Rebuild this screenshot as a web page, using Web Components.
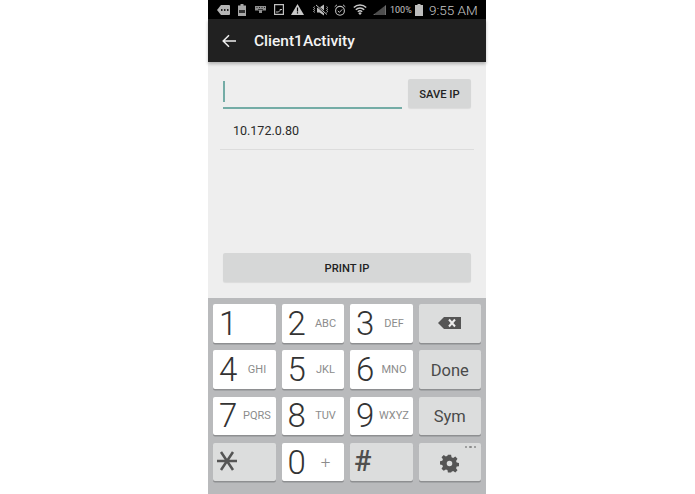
<!DOCTYPE html>
<html>
<head>
<meta charset="utf-8">
<title>Client1Activity</title>
<style>
  html, body { margin: 0; padding: 0; background: #fff; }
  body { display: grid; grid-template-columns: 208px 278px 1fr; height: 494px; overflow: hidden; font-family: Roboto, "Liberation Sans", sans-serif; }
  phone-screen { grid-column: 2; }
</style>
</head>
<body>
<phone-screen>
  <status-bar></status-bar>
  <app-bar title="Client1Activity"></app-bar>
  <ip-form></ip-form>
  <num-keyboard></num-keyboard>
</phone-screen>

<script>
class PhoneScreen extends HTMLElement {
  constructor() {
    super();
    this.attachShadow({ mode: 'open' }).innerHTML = `
      <style>
        :host { display: flex; flex-direction: column; height: 494px; background: #eee; }
      </style>
      <slot></slot>
    `;
  }
}

class StatusBar extends HTMLElement {
  constructor() {
    super();
    this.attachShadow({ mode: 'open' }).innerHTML = `
      <style>
        :host { display: flex; align-items: center; height: 19px; background: #000; color: #bdbdbd; flex: none; }
        svg { display: block; flex: none; }
        .pct { font-size: 9px; margin-left: 4px; width: 21px; color: #c4c4c4; }
        .time { font-size: 13.500px; font-weight: 300; margin-left: 6px; color: #c8c8c8; white-space: nowrap; }
      </style>
      <svg style="margin-left:9px" width="13" height="10" viewBox="0 0 13 10"><path fill="#b5b5b5" d="M4 0h8a1 1 0 0 1 1 1v8a1 1 0 0 1-1 1H4L0 5z"/><path fill="#222" d="M4 4h1.500v2H4zM7 4h1.500v2H7zM10 4h1.500v2H10z"/></svg>
      <svg style="margin-left:8px" width="8" height="12" viewBox="0 0 8 12"><path fill="#a8a8a8" d="M2.500 0h3v1.500H8V12H0V1.500h2.500z"/><path fill="#333" d="M1 6h6v3H1z"/></svg>
      <svg style="margin-left:9px" width="11" height="7" viewBox="0 0 11 7"><path fill="#8f8f8f" d="M0 0h11v4.500H7V7H4V4.500H0z"/><path fill="#222" d="M1.500 1h1v1h-1zM4 1h1v1H4zM6.500 1h1v1h-1zM9 1h1v1H9zM3 3h5v.7H3z"/></svg>
      <svg style="margin-left:8px" width="10" height="11" viewBox="0 0 10 11"><path fill="none" stroke="#c0c0c0" stroke-width="1.200" d="M.6.600h8.800v9.800H.6z"/><path fill="none" stroke="#c0c0c0" d="M2 8h2.500l1.500-1.500V5.500h2"/></svg>
      <svg style="margin-left:7px" width="13" height="11" viewBox="0 0 13 11"><path fill="#c8c8c8" d="M6.500 0L13 11H0z"/><path fill="#000" d="M5.900 3.500h1.200v4H5.900zM5.900 8.200h1.200v1.300H5.900z"/></svg>
      <svg style="margin-left:8px" width="18" height="12" viewBox="0 0 18 12" fill="none" stroke="#bdbdbd"><path fill="#bdbdbd" stroke="none" d="M5 3.500h2.500L12 .5v11L7.500 8.500H5z"/><path d="M4 1L15 10.500" stroke="#000" stroke-width="2"/><path d="M4 1L15 10.500" stroke="#d0d0d0" stroke-width=".9"/><path d="M2.800 2.500l-1.300 1 1.300 1-1.300 1 1.300 1-1.300 1 1.300 1M14.500 2.500l1.300 1-1.300 1 1.300 1-1.300 1 1.300 1-1.300 1" stroke-width=".8"/></svg>
      <svg style="margin-left:4px" width="12" height="12" viewBox="0 0 12 12" fill="none" stroke="#bdbdbd"><circle cx="6" cy="6.800" r="4.400" stroke-width="1.100"/><path d="M3.800 6.800l1.600 1.600 2.800-3M.7 2.800L3 .8M11.300 2.800L9 .8" stroke-width="1"/></svg>
      <svg style="margin-left:7px" width="14" height="11" viewBox="0 0 14 11"><path fill="none" stroke="#c8c8c8" stroke-width="1.500" d="M.8 3.500a9 9 0 0 1 12.400 0M2.800 5.700a6 6 0 0 1 8.400 0M4.800 7.800a3.200 3.200 0 0 1 4.400 0"/><path fill="#c8c8c8" d="M7 11L5.300 9.200a2.400 2.400 0 0 1 3.400 0z"/></svg>
      <svg style="margin-left:6px" width="13" height="10" viewBox="0 0 13 10"><path fill="#6e6e6e" d="M13 0v10H0z"/><path stroke="#000" stroke-width=".6" d="M3 10V7M5 10V5M7 10V4M9 10V2.500M11 10V1"/></svg>
      <span class="pct">100%</span>
      <svg style="margin-left:4px" width="8" height="12" viewBox="0 0 8 12"><path fill="#bdbdbd" d="M2.500 0h3v1H8v11H0V1h2.500z"/></svg>
      <span class="time">9:55 AM</span>
    `;
  }
}

class AppBar extends HTMLElement {
  constructor() {
    super();
    this.attachShadow({ mode: 'open' }).innerHTML = `
      <style>
        :host { display: flex; align-items: center; height: 43px; background: #212121; color: #fff; flex: none; padding-left: 14px; box-shadow: 0 2px 3px rgba(0,0,0,.25); z-index: 1; }
        svg { display: block; }
        span { font-size: 15.500px; font-weight: 500; margin-left: 18px; color: #f4f4f4; }
      </style>
      <svg width="14" height="14" viewBox="0 0 14 14" fill="none" stroke="#f0f0f0" stroke-width="1.500"><path d="M14 7H1.500M7 1.200L1.200 7 7 12.800"/></svg>
      <span></span>
    `;
  }

  connectedCallback() {
    this.shadowRoot.querySelector('span').textContent = this.getAttribute('title');
  }
}

class FlatButton extends HTMLElement {
  constructor() {
    super();
    this.attachShadow({ mode: 'open' }).innerHTML = `
      <style>
        :host { display: flex; align-items: center; justify-content: center; box-sizing: border-box; height: 29px; padding-top: 1px; background: #d6d7d7; color: #222; border-radius: 2px; font-size: 11.200px; font-weight: 500; box-shadow: 0 1px 1px rgba(0,0,0,.08); }
      </style>
      <slot></slot>
    `;
  }
}

class IpForm extends HTMLElement {
  constructor() {
    super();
    this.attachShadow({ mode: 'open' }).innerHTML = `
      <style>
        :host { display: flex; flex-direction: column; flex: 1; padding-top: 17px; background: #eee; }
        .top { display: flex; align-items: flex-start; margin: 0 15px; gap: 6px; }
        .field { flex: 1; height: 30px; border-bottom: 2px solid #74aca6; box-sizing: border-box; }
        .caret { display: block; width: 2px; height: 21px; margin-top: 2px; background: #74aca6; }
        .save { width: 63px; flex: none; }
        .item { margin: 9px 12px 0; height: 32px; padding: 4px 0 0 13px; box-sizing: border-box; border-bottom: 1px solid #dcdcdc; font-size: 12.500px; color: #2a2a2a; line-height: 18px; }
        .print { margin: auto 15px 16px; height: 29px; }
      </style>
      <div class="top">
        <div class="field"><i class="caret"></i></div>
        <flat-button class="save">SAVE IP</flat-button>
      </div>
      <div class="item">10.172.0.80</div>
      <flat-button class="print">PRINT IP</flat-button>
    `;
  }
}

class KeyCap extends HTMLElement {
  constructor() {
    super();
    this.attachShadow({ mode: 'open' }).innerHTML = `
      <style>
        :host { display: flex; align-items: center; position: relative; background: #fff; border-radius: 2px; box-shadow: 0 1.500px 0 #8e8f91; color: #333; min-width: 0; }
        :host([fn]) { background: #dcdddd; justify-content: center; color: #4a4a4a; }
        .main { font-size: 33px; font-weight: 300; line-height: 39px; margin-left: 6px; width: 22px; flex: none; }
        .sub { flex: 1; font-size: 11px; color: #8c8c8c; text-align: center; padding-right: 2.500px; white-space: nowrap; }
        :host([sub="+"]) .sub { font-size: 17px; font-weight: 300; }
      </style>
      <span class="main"></span><span class="sub"></span><slot></slot>
    `;
  }

  connectedCallback() {
    const main = this.shadowRoot.querySelector('.main');
    const sub = this.shadowRoot.querySelector('.sub');
    if (this.hasAttribute('num')) {
      main.textContent = this.getAttribute('num');
      sub.textContent = this.getAttribute('sub') || '';
    } else {
      main.remove();
      sub.remove();
    }
  }
}

class NumKeyboard extends HTMLElement {
  constructor() {
    super();
    this.attachShadow({ mode: 'open' }).innerHTML = `
      <style>
        :host { display: grid; grid-template-columns: repeat(4, 1fr); grid-auto-rows: 38.500px; gap: 7.800px 6px; flex: none; height: 196px; box-sizing: border-box; padding: 6px 5px 0; background: #b9babc; }
        .word { font-size: 16.500px; color: #4a4a4a; padding-top: 1px; }
        svg { display: block; }
        .star { justify-content: flex-start; padding-left: 3px; }
        .hash { justify-content: flex-start; padding-left: 4px; font-size: 29px; font-weight: 500; color: #4f4f4f; padding-bottom: 3px; }
        .gear { margin-top: 3px; }
        .dots { position: absolute; right: 5px; top: 3px; display: flex; gap: 2px; }
        .dots i { width: 2.500px; height: 2.500px; background: #8a8a8a; border-radius: 50%; }
      </style>
      <key-cap num="1"></key-cap>
      <key-cap num="2" sub="ABC"></key-cap>
      <key-cap num="3" sub="DEF"></key-cap>
      <key-cap fn><svg width="23" height="12" viewBox="0 0 23 12"><path fill="#555" d="M6 0h17v12H6L0 6z"/><path stroke="#eee" stroke-width="2" d="M11 2.500l6 7M17 2.500l-6 7"/></svg></key-cap>
      <key-cap num="4" sub="GHI"></key-cap>
      <key-cap num="5" sub="JKL"></key-cap>
      <key-cap num="6" sub="MNO"></key-cap>
      <key-cap fn><span class="word">Done</span></key-cap>
      <key-cap num="7" sub="PQRS"></key-cap>
      <key-cap num="8" sub="TUV"></key-cap>
      <key-cap num="9" sub="WXYZ"></key-cap>
      <key-cap fn><span class="word">Sym</span></key-cap>
      <key-cap fn class="star"><svg width="22" height="20" viewBox="0 0 22 20" fill="none" stroke="#555" stroke-width="2.500" style="margin-bottom:3px"><path d="M1 10h20M5 1l12 18M17 1L5 19"/></svg></key-cap>
      <key-cap num="0" sub="+"></key-cap>
      <key-cap fn class="hash">#</key-cap>
      <key-cap fn>
        <svg class="gear" width="19" height="19" viewBox="0 0 24 24"><path fill="#555" fill-rule="evenodd" d="M10 1h4l.6 3.200 2 .8L19.300 3.200l2.800 2.800-1.800 2.700.8 2 3.200.6v4l-3.200.6-.8 2 1.800 2.700-2.800 2.800-2.700-1.800-2 .8L14 23.500h-4l-.6-3.200-2-.8-2.700 1.800-2.800-2.800 1.800-2.700-.8-2L-.3 13.200v-4l3.200-.6.800-2L1.900 4l2.800-2.800 2.700 1.800 2-.8zM12 8.500a3.500 3.500 0 1 0 0 7 3.500 3.500 0 0 0 0-7z"/></svg>
        <div class="dots"><i></i><i></i><i></i></div>
      </key-cap>
    `;
  }
}

customElements.define('phone-screen', PhoneScreen);
customElements.define('status-bar', StatusBar);
customElements.define('app-bar', AppBar);
customElements.define('flat-button', FlatButton);
customElements.define('ip-form', IpForm);
customElements.define('key-cap', KeyCap);
customElements.define('num-keyboard', NumKeyboard);
</script>
</body>
</html>
